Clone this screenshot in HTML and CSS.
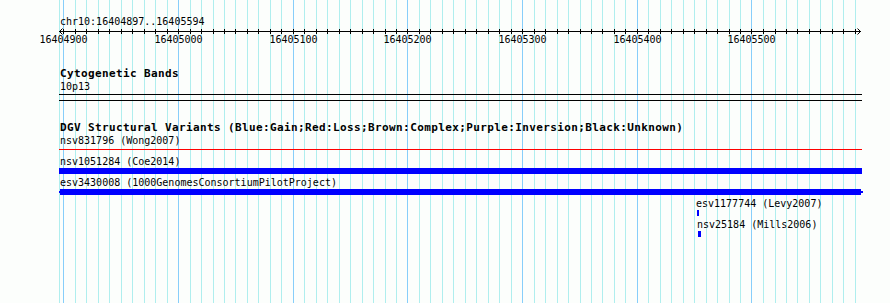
FILE: index.html
```html
<!DOCTYPE html>
<html lang="en">
<head>
<meta charset="utf-8">
<title>chr10:16404897..16405594</title>
<link rel="stylesheet" href="styles.css">
</head>
<body>
<div class="panel">
  <svg class="grid" width="890" height="303" viewBox="0 0 890 303" aria-hidden="true">
    <g class="minor">
      <rect x="59" y="0" width="1" height="303"/>
      <rect x="75" y="0" width="1" height="303"/><rect x="86" y="0" width="1" height="303"/><rect x="98" y="0" width="1" height="303"/><rect x="109" y="0" width="1" height="303"/><rect x="121" y="0" width="1" height="303"/><rect x="132" y="0" width="1" height="303"/><rect x="144" y="0" width="1" height="303"/><rect x="155" y="0" width="1" height="303"/><rect x="167" y="0" width="1" height="303"/>
      <rect x="190" y="0" width="1" height="303"/><rect x="201" y="0" width="1" height="303"/><rect x="213" y="0" width="1" height="303"/><rect x="224" y="0" width="1" height="303"/><rect x="235" y="0" width="1" height="303"/><rect x="247" y="0" width="1" height="303"/><rect x="258" y="0" width="1" height="303"/><rect x="270" y="0" width="1" height="303"/><rect x="281" y="0" width="1" height="303"/>
      <rect x="304" y="0" width="1" height="303"/><rect x="316" y="0" width="1" height="303"/><rect x="327" y="0" width="1" height="303"/><rect x="339" y="0" width="1" height="303"/><rect x="350" y="0" width="1" height="303"/><rect x="362" y="0" width="1" height="303"/><rect x="373" y="0" width="1" height="303"/><rect x="385" y="0" width="1" height="303"/><rect x="396" y="0" width="1" height="303"/>
      <rect x="419" y="0" width="1" height="303"/><rect x="430" y="0" width="1" height="303"/><rect x="442" y="0" width="1" height="303"/><rect x="453" y="0" width="1" height="303"/><rect x="465" y="0" width="1" height="303"/><rect x="476" y="0" width="1" height="303"/><rect x="488" y="0" width="1" height="303"/><rect x="499" y="0" width="1" height="303"/><rect x="511" y="0" width="1" height="303"/>
      <rect x="534" y="0" width="1" height="303"/><rect x="545" y="0" width="1" height="303"/><rect x="557" y="0" width="1" height="303"/><rect x="568" y="0" width="1" height="303"/><rect x="580" y="0" width="1" height="303"/><rect x="591" y="0" width="1" height="303"/><rect x="602" y="0" width="1" height="303"/><rect x="614" y="0" width="1" height="303"/><rect x="625" y="0" width="1" height="303"/>
      <rect x="648" y="0" width="1" height="303"/><rect x="660" y="0" width="1" height="303"/><rect x="671" y="0" width="1" height="303"/><rect x="683" y="0" width="1" height="303"/><rect x="694" y="0" width="1" height="303"/><rect x="706" y="0" width="1" height="303"/><rect x="717" y="0" width="1" height="303"/><rect x="729" y="0" width="1" height="303"/><rect x="740" y="0" width="1" height="303"/>
      <rect x="763" y="0" width="1" height="303"/><rect x="775" y="0" width="1" height="303"/><rect x="786" y="0" width="1" height="303"/><rect x="797" y="0" width="1" height="303"/><rect x="809" y="0" width="1" height="303"/><rect x="820" y="0" width="1" height="303"/><rect x="832" y="0" width="1" height="303"/><rect x="843" y="0" width="1" height="303"/><rect x="855" y="0" width="1" height="303"/>
    </g>
    <g class="major">
      <rect x="63" y="0" width="1" height="303"/><rect x="178" y="0" width="1" height="303"/><rect x="293" y="0" width="1" height="303"/><rect x="407" y="0" width="1" height="303"/><rect x="522" y="0" width="1" height="303"/><rect x="637" y="0" width="1" height="303"/><rect x="751" y="0" width="1" height="303"/>
    </g>
  </svg>

  <div class="tracks">
    <section class="ruler">
      <div class="seg-label">chr10:16404897..16405594</div>
      <svg class="axis" width="890" height="20" viewBox="0 0 890 20">
        <rect class="ink" x="59" y="4" width="802" height="1"/>
        <polyline class="arrow" points="62.5,1.5 59.5,4.5 62.5,7.5"/>
        <polyline class="arrow" points="857.5,1.5 860.5,4.5 857.5,7.5"/>
        <g class="ink">
          <rect x="63" y="2" width="1" height="5"/><rect x="75" y="2" width="1" height="5"/><rect x="86" y="2" width="1" height="5"/><rect x="98" y="2" width="1" height="5"/><rect x="109" y="2" width="1" height="5"/><rect x="121" y="2" width="1" height="5"/><rect x="132" y="2" width="1" height="5"/><rect x="144" y="2" width="1" height="5"/><rect x="155" y="2" width="1" height="5"/><rect x="167" y="2" width="1" height="5"/>
          <rect x="178" y="2" width="1" height="5"/><rect x="190" y="2" width="1" height="5"/><rect x="201" y="2" width="1" height="5"/><rect x="213" y="2" width="1" height="5"/><rect x="224" y="2" width="1" height="5"/><rect x="235" y="2" width="1" height="5"/><rect x="247" y="2" width="1" height="5"/><rect x="258" y="2" width="1" height="5"/><rect x="270" y="2" width="1" height="5"/><rect x="281" y="2" width="1" height="5"/>
          <rect x="293" y="2" width="1" height="5"/><rect x="304" y="2" width="1" height="5"/><rect x="316" y="2" width="1" height="5"/><rect x="327" y="2" width="1" height="5"/><rect x="339" y="2" width="1" height="5"/><rect x="350" y="2" width="1" height="5"/><rect x="362" y="2" width="1" height="5"/><rect x="373" y="2" width="1" height="5"/><rect x="385" y="2" width="1" height="5"/><rect x="396" y="2" width="1" height="5"/>
          <rect x="407" y="2" width="1" height="5"/><rect x="419" y="2" width="1" height="5"/><rect x="430" y="2" width="1" height="5"/><rect x="442" y="2" width="1" height="5"/><rect x="453" y="2" width="1" height="5"/><rect x="465" y="2" width="1" height="5"/><rect x="476" y="2" width="1" height="5"/><rect x="488" y="2" width="1" height="5"/><rect x="499" y="2" width="1" height="5"/><rect x="511" y="2" width="1" height="5"/>
          <rect x="522" y="2" width="1" height="5"/><rect x="534" y="2" width="1" height="5"/><rect x="545" y="2" width="1" height="5"/><rect x="557" y="2" width="1" height="5"/><rect x="568" y="2" width="1" height="5"/><rect x="580" y="2" width="1" height="5"/><rect x="591" y="2" width="1" height="5"/><rect x="602" y="2" width="1" height="5"/><rect x="614" y="2" width="1" height="5"/><rect x="625" y="2" width="1" height="5"/>
          <rect x="637" y="2" width="1" height="5"/><rect x="648" y="2" width="1" height="5"/><rect x="660" y="2" width="1" height="5"/><rect x="671" y="2" width="1" height="5"/><rect x="683" y="2" width="1" height="5"/><rect x="694" y="2" width="1" height="5"/><rect x="706" y="2" width="1" height="5"/><rect x="717" y="2" width="1" height="5"/><rect x="729" y="2" width="1" height="5"/><rect x="740" y="2" width="1" height="5"/>
          <rect x="751" y="2" width="1" height="5"/><rect x="763" y="2" width="1" height="5"/><rect x="775" y="2" width="1" height="5"/><rect x="786" y="2" width="1" height="5"/><rect x="797" y="2" width="1" height="5"/><rect x="809" y="2" width="1" height="5"/><rect x="820" y="2" width="1" height="5"/><rect x="832" y="2" width="1" height="5"/><rect x="843" y="2" width="1" height="5"/><rect x="855" y="2" width="1" height="5"/>
        </g>
        <g class="tick-labels">
          <text x="63.5" y="16">16404900</text>
          <text x="178.5" y="16">16405000</text>
          <text x="293.5" y="16">16405100</text>
          <text x="407.5" y="16">16405200</text>
          <text x="522.5" y="16">16405300</text>
          <text x="637.5" y="16">16405400</text>
          <text x="751.5" y="16">16405500</text>
        </g>
      </svg>
    </section>

    <section class="track cyto">
      <div class="track-title">Cytogenetic Bands</div>
      <div class="feat-label">10p13</div>
      <div class="band"></div>
    </section>

    <section class="track dgv">
      <div class="track-title">DGV Structural Variants (Blue:Gain;Red:Loss;Brown:Complex;Purple:Inversion;Black:Unknown)</div>
      <div class="feature">
        <div class="feat-label">nsv831796 (Wong2007)</div>
        <div class="loss-line"></div>
      </div>
      <div class="feature">
        <div class="feat-label">nsv1051284 (Coe2014)</div>
        <div class="gain-bar"></div>
      </div>
      <div class="feature">
        <div class="feat-label">esv3430008 (1000GenomesConsortiumPilotProject)</div>
        <div class="gain-bar arrowed"><span class="stub stub-l"></span><span class="bar-body"></span><span class="stub stub-r"></span></div>
      </div>
      <div class="feature">
        <div class="feat-label at-697">esv1177744 (Levy2007)</div>
        <div class="gain-tick tick-697"></div>
      </div>
      <div class="feature">
        <div class="feat-label at-698">nsv25184 (Mills2006)</div>
        <div class="gain-tick tick-698"></div>
      </div>
    </section>
  </div>
</div>
</body>
</html>
```

FILE: styles.css
```css
html, body {
  margin: 0;
  padding: 0;
  background: #fcfefc;
}

.panel {
  position: relative;
  width: 890px;
  height: 303px;
  overflow: hidden;
  font-family: "DejaVu Sans Mono", "Liberation Mono", monospace;
  font-size: 10px;
  line-height: 11px;
  color: #000;
}

.grid {
  position: absolute;
  left: 0;
  top: 0;
  display: block;
}

.grid .minor { fill: #afeeee; }
.grid .major { fill: #87cefa; }

.tracks {
  position: relative;
}

/* ---------- ruler ---------- */
.ruler {
  padding-top: 16px;
}

.seg-label {
  height: 11px;
  padding-left: 60px;
  white-space: nowrap;
}

.axis {
  display: block;
}

.axis .ink { fill: #000; }
.axis .arrow {
  fill: none;
  stroke: #000;
  stroke-width: 1;
}

.tick-labels text {
  font-family: "DejaVu Sans Mono", "Liberation Mono", monospace;
  font-size: 10px;
  text-anchor: middle;
  fill: #000;
}

/* ---------- tracks ---------- */
.track {
  margin-top: 21px;
}

.track-title {
  height: 11px;
  padding-left: 60px;
  font-size: 11px;
  line-height: 11px;
  font-weight: bold;
  letter-spacing: 0.38px;
  white-space: nowrap;
}

.feat-label {
  height: 11px;
  padding-left: 60px;
  white-space: nowrap;
}

.feat-label.at-697 { padding-left: 696px; }
.feat-label.at-698 { padding-left: 697px; }

.cyto .feat-label {
  margin-top: 2px;
}

.band {
  margin-top: 2px;
  margin-left: 59px;
  width: 803px;
  height: 5px;
  border-top: 1px solid #000;
  border-bottom: 1px solid #000;
}

.dgv .track-title {
  margin-bottom: 2px;
}

.feature {
  height: 21px;
}

.loss-line {
  margin-top: 3px;
  margin-left: 59px;
  width: 803px;
  height: 1px;
  background: #ff0000;
}

.gain-bar {
  margin-top: 1px;
  margin-left: 59px;
  width: 803px;
  height: 6px;
  background: #0000ff;
}

.gain-bar.arrowed {
  display: flex;
  align-items: center;
  width: 804px;
  background: none;
}

.stub {
  height: 2px;
  background: #0000ff;
}

.stub-l { width: 1px; }
.stub-r { width: 2px; }

.bar-body {
  width: 801px;
  height: 6px;
  background: #0000ff;
}

.gain-tick {
  margin-top: 1px;
  height: 6px;
  background: #0000ff;
}

.tick-697 { margin-left: 697px; width: 2px; }
.tick-698 { margin-left: 698px; width: 3px; }
```
